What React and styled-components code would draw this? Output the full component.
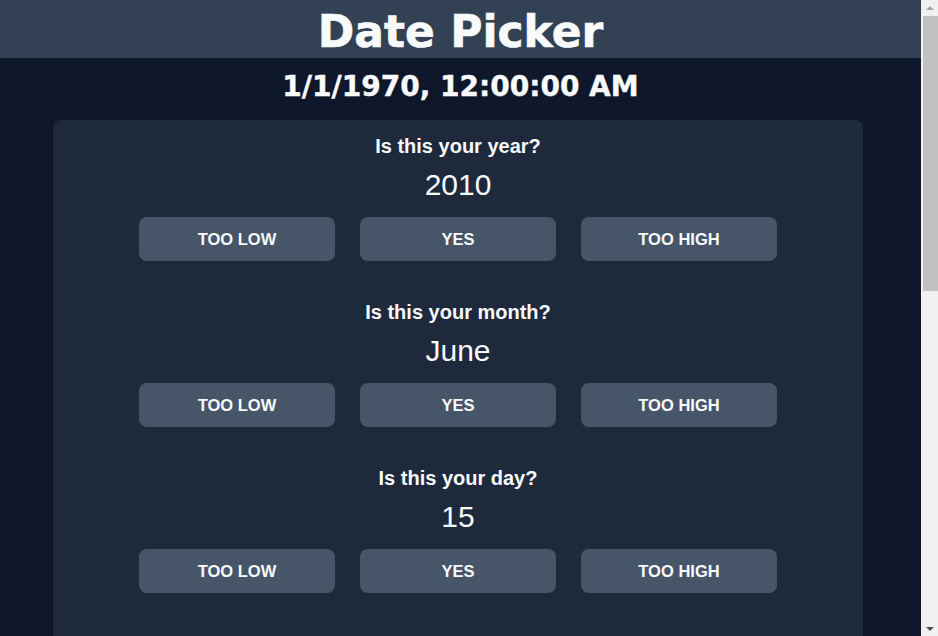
import React, { useState } from "react";
import styled, { createGlobalStyle } from "styled-components";

const GlobalStyle = createGlobalStyle`
  html, body {
    margin: 0;
    padding: 0;
    background: #0f172a;
    color: #f8fafc;
    font-family: "Liberation Sans", Arial, sans-serif;
  }

  body {
    margin-right: 17px;
  }
`;

const MONTHS = [
  "January", "February", "March", "April", "May", "June",
  "July", "August", "September", "October", "November", "December",
];

/* =========================
   Styled Components
========================= */

const Page = styled.div`
  padding-bottom: 116px;
`;

const Header = styled.header`
  height: 58px;
  box-sizing: border-box;
  padding-top: 6px;
  background: #334155;
  text-align: center;
`;

const Title = styled.h1`
  margin: 0;
  font-family: "DejaVu Sans", "Liberation Sans", sans-serif;
  font-weight: 700;
  font-size: 44px;
  line-height: normal;
  color: #f8fafc;
  -webkit-text-stroke: 0.6px #f8fafc;
`;

const CurrentDate = styled.h2`
  margin: 12px 0 17px;
  text-align: center;
  font-family: "DejaVu Sans", "Liberation Sans", sans-serif;
  font-weight: 700;
  font-size: 28px;
  line-height: normal;
  -webkit-text-stroke: 0.4px #f8fafc;
`;

const Card = styled.main`
  width: 810px;
  margin-left: 53px;
  box-sizing: border-box;
  padding: 15px 0 14px;
  background: #1e293b;
  border-radius: 8px;
  display: flex;
  flex-direction: column;
  gap: 40px;
`;

const Section = styled.section`
  display: flex;
  flex-direction: column;
  align-items: center;
`;

const Question = styled.h3`
  margin: 0 0 10px;
  font-size: 20px;
  font-weight: 700;
  line-height: 23px;
`;

const Value = styled.div`
  margin-bottom: 15px;
  font-size: 30px;
  line-height: 34px;
`;

const Buttons = styled.div`
  display: flex;
  gap: 25px;
`;

const Button = styled.button`
  width: 196px;
  height: 44px;
  border: none;
  border-radius: 8px;
  background: #475569;
  color: #f8fafc;
  font-family: "Liberation Sans", Arial, sans-serif;
  font-weight: 700;
  font-size: 16.5px;
  text-transform: uppercase;
  cursor: pointer;

  &:hover {
    background: #526177;
  }
`;

/* window scrollbar, drawn over the right edge */
const ScrollTrack = styled.div`
  position: fixed;
  top: 0;
  right: 0;
  width: 17px;
  height: 100vh;
  background: #f1f1f1;
  display: flex;
  flex-direction: column;
  align-items: center;
`;

const Arrow = styled.div`
  width: 0;
  height: 0;
  margin: ${(p) => (p.$down ? "auto 0 5px" : "6px 0 0")};
  border-left: 4px solid transparent;
  border-right: 4px solid transparent;
  border-${(p) => (p.$down ? "top" : "bottom")}: 4px solid
    ${(p) => (p.$down ? "#505050" : "#a3a3a3")};
`;

const Thumb = styled.div`
  width: 15px;
  margin: 6px 0 0 2px;
  height: 275px;
  background: #c1c1c1;
`;

/* =========================
   Component
========================= */

const FIELDS = [
  { key: "year", value: "2010" },
  { key: "month", value: MONTHS[5] },
  { key: "day", value: "15" },
  { key: "hour", value: "12" },
  { key: "minute", value: "30" },
  { key: "second", value: "30" },
  { key: "millisecond", value: "500" },
];

const GuessSection = ({ field, value }) => (
  <Section>
    <Question>Is this your {field}?</Question>
    <Value>{value}</Value>
    <Buttons>
      <Button>Too low</Button>
      <Button>Yes</Button>
      <Button>Too high</Button>
    </Buttons>
  </Section>
);

export default function App() {
  const [date] = useState(() => new Date(1970, 0, 1, 0, 0, 0));

  return (
    <Page>
      <GlobalStyle />
      <Header>
        <Title>Date Picker</Title>
      </Header>
      <CurrentDate>{date.toLocaleString("en-US")}</CurrentDate>
      <Card>
        {FIELDS.map((f) => (
          <GuessSection key={f.key} field={f.key} value={f.value} />
        ))}
      </Card>
      <ScrollTrack>
        <Arrow />
        <Thumb />
        <Arrow $down />
      </ScrollTrack>
    </Page>
  );
}
